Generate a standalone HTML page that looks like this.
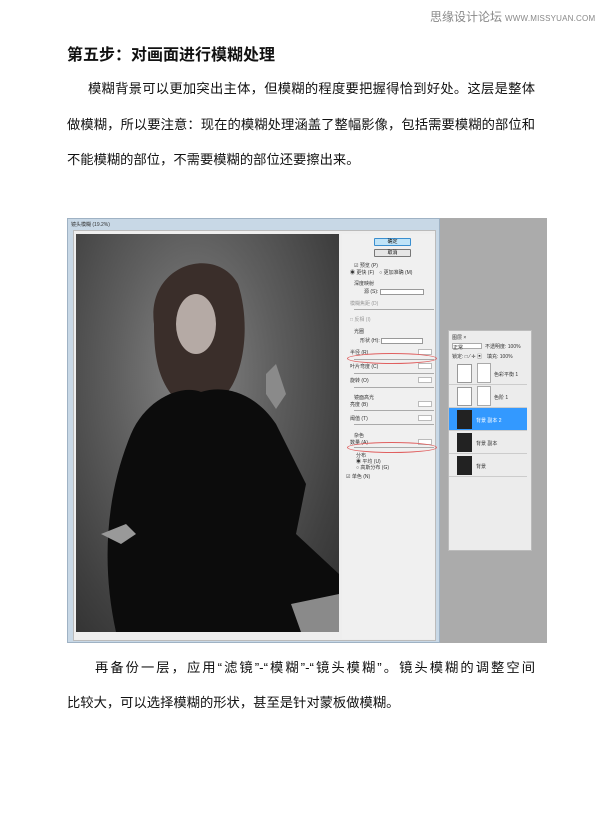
<!DOCTYPE html>
<html><head><meta charset="utf-8"><style>
*{margin:0;padding:0;box-sizing:border-box}
body{width:607px;height:832px;background:#fff;position:relative;overflow:hidden;font-family:"Liberation Sans","Noto Sans CJK SC",sans-serif;color:#111}
.wm{position:absolute;top:8px;left:430px;font-size:12px;color:#888;white-space:nowrap}
.wm span{font-size:8px;letter-spacing:0.2px;margin-left:3px}
h1{position:absolute;left:67px;top:41px;font-size:16px;font-weight:bold}
.l{position:absolute;left:67px;width:468px;font-size:13.3px;line-height:20px;white-space:nowrap;text-align:justify;text-align-last:justify}
.img{position:absolute;left:67px;top:218px;width:480px;height:425px;background:#ababab}
.win{position:absolute;left:0;top:0;width:373px;height:425px;background:#c8d8e6;border:1px solid #9fb2c4}
.tb{position:absolute;left:3px;top:2px;font-size:5px;color:#333}
.inner{position:absolute;left:5px;top:11px;width:363px;height:411px;background:#eee;border:1px solid #bbb}
.photo{position:absolute;left:2px;top:3px;width:263px;height:398px;background:radial-gradient(ellipse at 45% 35%,#858585 0%,#5e5e5e 40%,#404040 75%,#2e2e2e 100%);overflow:hidden}
.ctl{position:absolute;left:268px;top:3px;width:93px;height:405px;background:#f0f0f0}
.btn{position:absolute;left:32px;width:37px;height:8px;border:1px solid #777;background:#e6e6e6;border-radius:1px;font-size:5px;text-align:center;line-height:6px}
.row{position:absolute;font-size:5px;color:#333;white-space:nowrap}
.sl{position:absolute;left:12px;width:80px;height:1px;background:#aaa}
.fld{position:absolute;left:76px;width:14px;height:6px;background:#fff;border:1px solid #bbb}
.ell{position:absolute;left:5px;width:90px;height:11px;border:1px solid #e06060;border-radius:50%}
.lay{position:absolute;left:381px;top:112px;width:84px;height:221px;background:#ececec;border:1px solid #bbb}
.lr{position:absolute;left:0;width:78px;height:23px;border-bottom:1px solid #ccc}
.th{position:absolute;left:8px;top:2px;width:15px;height:19px;background:#222}
</style></head><body>
<div class="wm">思缘设计论坛<span>WWW.MISSYUAN.COM</span></div>
<h1>第五步：对画面进行模糊处理</h1>
<div class="l" style="top:79px;left:88px;width:447px">模糊背景可以更加突出主体，但模糊的程度要把握得恰到好处。这层是整体</div>
<div class="l" style="top:115px">做模糊，所以要注意：现在的模糊处理涵盖了整幅影像，包括需要模糊的部位和</div>
<div class="l" style="top:150px;width:auto;text-align-last:auto">不能模糊的部位，不需要模糊的部位还要擦出来。</div>
<div class="img">
 <div class="win">
  <div class="tb">镜头模糊 (19.2%)</div>
  <div class="inner">
   <div class="photo">
    <svg width="263" height="398" viewBox="0 0 263 398">
     <path d="M78 90 C70 30 140 10 162 50 C175 90 168 140 150 160 L95 160 C80 140 78 115 78 90Z" fill="#3a2e2a"/>
     <ellipse cx="120" cy="90" rx="20" ry="30" fill="#b5aaa5"/>
     <path d="M55 200 C70 165 105 150 125 158 C150 150 180 160 200 190 L230 250 L220 300 L263 340 L263 398 L40 398 C25 330 30 260 55 200Z" fill="#0c0c0c"/>
     <path d="M190 140 L200 130 L210 160 L200 175 L190 160Z" fill="#8a8a8a"/>
     <path d="M25 300 L50 290 L60 300 L45 310Z" fill="#999"/>
     <path d="M215 370 L263 360 L263 398 L225 398Z" fill="#8a8a8a"/>
    </svg>
   </div>
   <div class="ctl">
    <div class="btn" style="top:4px;border-color:#3a8fd0;background:#bfe3f7">确定</div>
    <div class="btn" style="top:15px">取消</div>
    <div class="row" style="left:12px;top:28px">☑ 预览 (P)</div>
    <div class="row" style="left:8px;top:35px">◉ 更快 (F)　○ 更加准确 (M)</div>
    <div class="row" style="left:12px;top:46px">深度映射</div>
    <div class="row" style="left:22px;top:54px">源 (S): <span style="display:inline-block;width:44px;height:6px;border:1px solid #999;background:#fff;vertical-align:middle"></span></div>
    <div class="row" style="left:8px;top:66px;color:#999">模糊焦距 (D)</div>
    <div class="sl" style="top:75px"></div>
    <div class="row" style="left:8px;top:82px;color:#999">□ 反相 (I)</div>
    <div class="row" style="left:12px;top:94px">光圈</div>
    <div class="row" style="left:18px;top:103px">形状 (H): <span style="display:inline-block;width:42px;height:6px;border:1px solid #999;background:#fff;vertical-align:middle"></span></div>
    <div class="row" style="left:8px;top:115px">半径 (R)</div><div class="fld" style="top:115px"></div>
    <div class="sl" style="top:125px"></div><div class="ell" style="top:119px"></div>
    <div class="row" style="left:8px;top:129px">叶片弯度 (C)</div><div class="fld" style="top:129px"></div>
    <div class="sl" style="top:139px"></div>
    <div class="row" style="left:8px;top:143px">旋转 (O)</div><div class="fld" style="top:143px"></div>
    <div class="sl" style="top:153px"></div>
    <div class="row" style="left:12px;top:160px">镜面高光</div>
    <div class="row" style="left:8px;top:167px">亮度 (B)</div><div class="fld" style="top:167px"></div>
    <div class="sl" style="top:176px"></div>
    <div class="row" style="left:8px;top:181px">阈值 (T)</div><div class="fld" style="top:181px"></div>
    <div class="sl" style="top:190px"></div>
    <div class="row" style="left:12px;top:198px">杂色</div>
    <div class="row" style="left:8px;top:205px">数量 (A)</div><div class="fld" style="top:205px"></div>
    <div class="sl" style="top:213px"></div><div class="ell" style="top:208px"></div>
    <div class="row" style="left:14px;top:218px">分布</div>
    <div class="row" style="left:14px;top:224px">◉ 平均 (U)</div>
    <div class="row" style="left:14px;top:230px">○ 高斯分布 (G)</div>
    <div class="row" style="left:4px;top:239px">☑ 单色 (N)</div>
   </div>
  </div>
 </div>
 <div class="lay">
  <div class="row" style="left:3px;top:3px">图层 ×</div>
  <div class="row" style="left:3px;top:12px;background:#fff;width:30px;height:6px;border:1px solid #aaa">正常</div>
  <div class="row" style="left:36px;top:12px">不透明度: 100%</div>
  <div class="row" style="left:3px;top:22px">锁定: □ ⁄ ✛ ▣　填充: 100%</div>
  <div class="lr" style="top:31px"><div class="th" style="background:#fff;border:1px solid #999"></div><div style="position:absolute;left:28px;top:1px;width:14px;height:20px;background:#fff;border:1px solid #aaa"></div><div class="row" style="left:45px;top:9px">色彩平衡 1</div></div>
  <div class="lr" style="top:54px"><div class="th" style="background:#fff;border:1px solid #999"></div><div style="position:absolute;left:28px;top:1px;width:14px;height:20px;background:#fff;border:1px solid #aaa"></div><div class="row" style="left:45px;top:9px">色阶 1</div></div>
  <div class="lr" style="top:77px;background:#3399ff"><div class="th"></div><div class="row" style="left:27px;top:9px;color:#fff">背景 副本 2</div></div>
  <div class="lr" style="top:100px"><div class="th"></div><div class="row" style="left:27px;top:9px">背景 副本</div></div>
  <div class="lr" style="top:123px"><div class="th"></div><div class="row" style="left:27px;top:9px">背景</div></div>
 </div>
</div>
<div class="l" style="top:658px;left:95px;width:440px">再备份一层，应用“滤镜”-“模糊”-“镜头模糊”。镜头模糊的调整空间</div>
<div class="l" style="top:693px;width:auto;text-align-last:auto">比较大，可以选择模糊的形状，甚至是针对蒙板做模糊。</div>
</body></html>
